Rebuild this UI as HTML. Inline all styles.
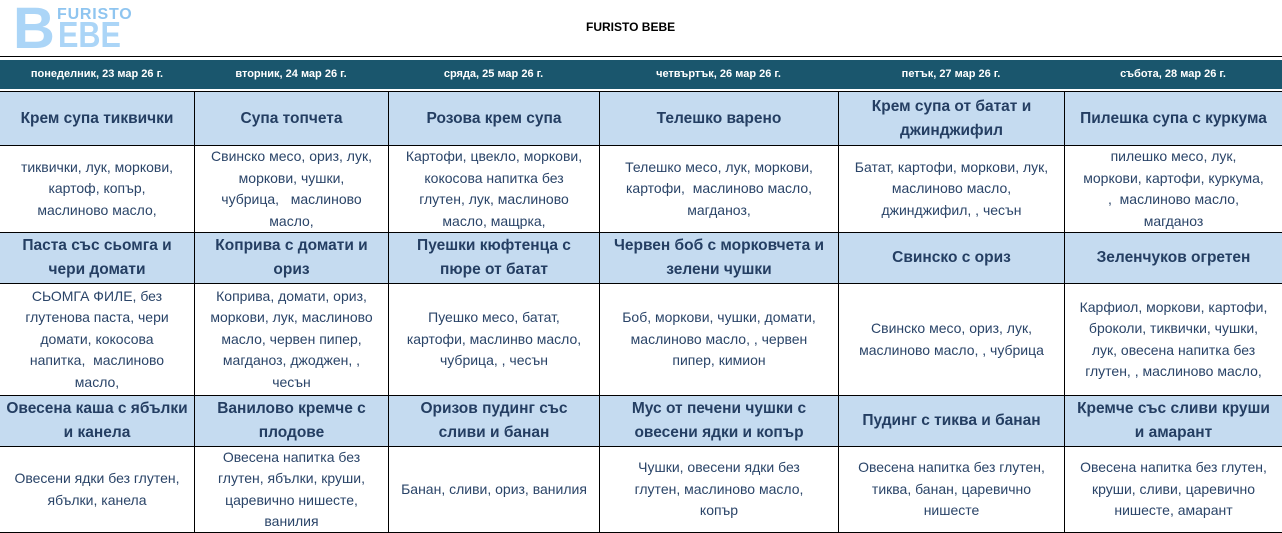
<!DOCTYPE html>
<html><head><meta charset="utf-8"><style>
body{margin:0;width:1282px;height:533px;background:#fff;position:relative;overflow:hidden;font-family:"Liberation Sans","DejaVu Sans",sans-serif;}
.a{position:absolute;}
.c{position:absolute;display:flex;align-items:center;justify-content:center;text-align:center;box-sizing:border-box;border-right:1px solid #000;border-bottom:1px solid #000;white-space:nowrap;}
.h{background:#c5dbf0;color:#243e62;font-weight:bold;font-size:15.5px;line-height:24px;}
.i{background:#fff;color:#2a4468;font-size:14px;line-height:21.5px;}
.d{color:#fff;font-weight:bold;font-size:11px;text-align:center;top:60px;height:29px;line-height:29px;}
</style></head><body>
<div class="a" style="left:13px;top:0px;font-size:58px;font-weight:bold;color:#abd5f7;line-height:58px;">B</div>
<div class="a" style="left:57px;top:7px;font-size:16px;font-weight:bold;color:#8fc5f0;line-height:16px;letter-spacing:0.8px;">FURISTO</div>
<div class="a" style="left:58px;top:17px;font-size:36px;font-weight:bold;color:#abd5f7;line-height:36px;transform:scaleX(0.85);transform-origin:left;">EBE</div>
<div class="a" style="left:586px;top:20px;font-size:12px;font-weight:bold;color:#000;">FURISTO BEBE</div>
<div class="a" style="left:0;top:56px;width:1282px;height:1px;background:#000;"></div>
<div class="a" style="left:0;top:60px;width:1282px;height:29px;background:#1a566d;"></div>
<div class="a d" style="left:0;width:194px;">понеделник, 23 мар 26 г.</div>
<div class="a d" style="left:194px;width:194px;">вторник, 24 мар 26 г.</div>
<div class="a d" style="left:388px;width:211px;">сряда, 25 мар 26 г.</div>
<div class="a d" style="left:599px;width:239px;">четвъртък, 26 мар 26 г.</div>
<div class="a d" style="left:838px;width:226px;">петък, 27 мар 26 г.</div>
<div class="a d" style="left:1064px;width:218px;">събота, 28 мар 26 г.</div>
<div class="a" style="left:0;top:91px;width:1282px;height:1px;background:#000;"></div>

<!-- row 1 -->
<div class="c h" style="left:0;top:92px;width:195px;height:54px;z-index:2">Крем супа тиквички</div>
<div class="c h" style="left:195px;top:92px;width:194px;height:54px;z-index:2">Супа топчета</div>
<div class="c h" style="left:389px;top:92px;width:211px;height:54px;z-index:2">Розова крем супа</div>
<div class="c h" style="left:600px;top:92px;width:239px;height:54px;z-index:2">Телешко варено</div>
<div class="c h" style="left:839px;top:92px;width:226px;height:54px;z-index:2">Крем супа от батат и<br>джинджифил</div>
<div class="c h" style="left:1065px;top:92px;width:217px;height:54px;border-right:0;z-index:2">Пилешка супа с куркума</div>

<div class="c i" style="left:0;top:146px;width:195px;height:87px;">тиквички, лук, моркови,<br>картоф, копър,<br>маслиново масло,</div>
<div class="c i" style="left:195px;top:146px;width:194px;height:87px;">Свинско месо, ориз, лук,<br>моркови, чушки,<br>чубрица,&nbsp;&nbsp; маслиново<br>масло,</div>
<div class="c i" style="left:389px;top:146px;width:211px;height:87px;">Картофи, цвекло, моркови,<br>кокосова напитка без<br>глутен, лук, маслиново<br>масло, мащрка,</div>
<div class="c i" style="left:600px;top:146px;width:239px;height:87px;">Телешко месо, лук, моркови,<br>картофи,&nbsp; маслиново масло,<br>магданоз,</div>
<div class="c i" style="left:839px;top:146px;width:226px;height:87px;">Батат, картофи, моркови, лук,<br>маслиново масло,<br>джинджифил, , чесън</div>
<div class="c i" style="left:1065px;top:146px;width:217px;height:87px;border-right:0;">пилешко месо, лук,<br>моркови, картофи, куркума,<br>,&nbsp; маслиново масло,<br>магданоз</div>

<!-- row 2 -->
<div class="c h" style="left:0;top:233px;width:195px;height:51px;">Паста със сьомга и<br>чери домати</div>
<div class="c h" style="left:195px;top:233px;width:194px;height:51px;">Коприва с домати и<br>ориз</div>
<div class="c h" style="left:389px;top:233px;width:211px;height:51px;">Пуешки кюфтенца с<br>пюре от батат</div>
<div class="c h" style="left:600px;top:233px;width:239px;height:51px;">Червен боб с морковчета и<br>зелени чушки</div>
<div class="c h" style="left:839px;top:233px;width:226px;height:51px;">Свинско с ориз</div>
<div class="c h" style="left:1065px;top:233px;width:217px;height:51px;border-right:0;">Зеленчуков огретен</div>

<div class="c i" style="left:0;top:284px;width:195px;height:112px;">СЬОМГА ФИЛЕ, без<br>глутенова паста, чери<br>домати, кокосова<br>напитка,&nbsp; маслиново<br>масло,</div>
<div class="c i" style="left:195px;top:284px;width:194px;height:112px;">Коприва, домати, ориз,<br>моркови, лук, маслиново<br>масло, червен пипер,<br>магданоз, джоджен, ,<br>чесън</div>
<div class="c i" style="left:389px;top:284px;width:211px;height:112px;">Пуешко месо, батат,<br>картофи, маслинво масло,<br>чубрица, , чесън</div>
<div class="c i" style="left:600px;top:284px;width:239px;height:112px;">Боб, моркови, чушки, домати,<br>маслиново масло, , червен<br>пипер, кимион</div>
<div class="c i" style="left:839px;top:284px;width:226px;height:112px;">Свинско месо, ориз, лук,<br>маслиново масло, , чубрица</div>
<div class="c i" style="left:1065px;top:284px;width:217px;height:112px;border-right:0;">Карфиол, моркови, картофи,<br>броколи, тиквички, чушки,<br>лук, овесена напитка без<br>глутен, , маслиново масло,</div>

<!-- row 3 -->
<div class="c h" style="left:0;top:396px;width:195px;height:51px;">Овесена каша с ябълки<br>и канела</div>
<div class="c h" style="left:195px;top:396px;width:194px;height:51px;">Ванилово кремче с<br>плодове</div>
<div class="c h" style="left:389px;top:396px;width:211px;height:51px;">Оризов пудинг със<br>сливи и банан</div>
<div class="c h" style="left:600px;top:396px;width:239px;height:51px;">Мус от печени чушки с<br>овесени ядки и копър</div>
<div class="c h" style="left:839px;top:396px;width:226px;height:51px;">Пудинг с тиква и банан</div>
<div class="c h" style="left:1065px;top:396px;width:217px;height:51px;border-right:0;">Кремче със сливи круши<br>и амарант</div>

<div class="c i" style="left:0;top:447px;width:195px;height:86px;">Овесени ядки без глутен,<br>ябълки, канела</div>
<div class="c i" style="left:195px;top:447px;width:194px;height:86px;">Овесена напитка без<br>глутен, ябълки, круши,<br>царевично нишесте,<br>ванилия</div>
<div class="c i" style="left:389px;top:447px;width:211px;height:86px;">Банан, сливи, ориз, ванилия</div>
<div class="c i" style="left:600px;top:447px;width:239px;height:86px;">Чушки, овесени ядки без<br>глутен, маслиново масло,<br>копър</div>
<div class="c i" style="left:839px;top:447px;width:226px;height:86px;">Овесена напитка без глутен,<br>тиква, банан, царевично<br>нишесте</div>
<div class="c i" style="left:1065px;top:447px;width:217px;height:86px;border-right:0;">Овесена напитка без глутен,<br>круши, сливи, царевично<br>нишесте, амарант</div>
</body></html>
